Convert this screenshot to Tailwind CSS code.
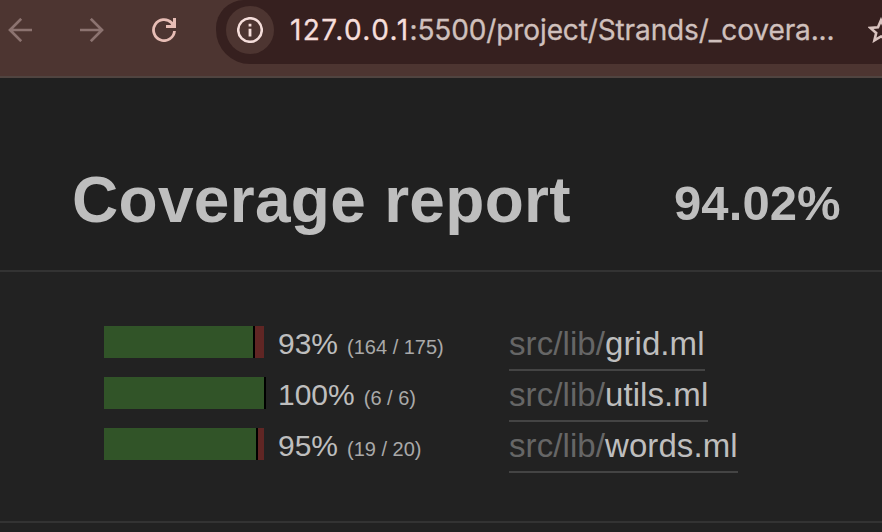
<!DOCTYPE html>
<html lang="en">
<head>
<meta charset="utf-8">
<title>Coverage report</title>
<script src="https://cdn.jsdelivr.net/npm/@tailwindcss/browser@4"></script>
</head>
<body class="w-[882px] h-[532px] overflow-hidden bg-[#222222] font-['Liberation_Sans',Arial,sans-serif] text-[#bebebe]">
<header class="h-[78px] flex items-start bg-[#4d3531] border-b-2 border-[#504440] overflow-hidden">
  <div class="flex w-[216px] h-[60px] shrink-0 items-center pl-2">
    <svg class="w-6 h-6 shrink-0" viewBox="0 0 24 24" fill="none" stroke="#8c7370" stroke-width="2.7"><path d="M24 12H2M13.2 .8L2 12l11.2 11.2"/></svg>
    <svg class="w-6 h-6 ml-12 shrink-0" viewBox="0 0 24 24" fill="none" stroke="#8c7370" stroke-width="2.7"><path d="M0 12h22M10.8 .8L22 12 10.8 23.2"/></svg>
    <svg class="w-6 h-6 ml-12 shrink-0" viewBox="0 0 24 24" fill="none" stroke="#e7bdb5" stroke-width="2.8"><path d="M22.5 13A10.5 10.5 0 1 1 19.6 4.8L21.5 7"/><path d="M21 0h3v10H14V7h4.5L21 4z" fill="#e7bdb5" stroke="none"/></svg>
  </div>
  <div class="w-[720px] h-16 shrink-0 flex items-start rounded-bl-[34px] rounded-tl-[28px] bg-[#36201f] font-[Inter,sans-serif]">
    <div class="w-12 h-12 mt-[6px] ml-[10px] shrink-0 rounded-full bg-[#4d3531] flex items-center justify-center">
      <svg class="w-[26px] h-[26px]" viewBox="0 0 26 26" fill="none" stroke="#f5dedb"><circle cx="13" cy="13" r="11.8" stroke-width="2.5"/><path d="M13 11.7v7.8M13 6.7v2.7" stroke-width="2.8"/></svg>
    </div>
    <div class="w-[578px] h-[60px] ml-4 shrink-0 flex items-center text-[28px] whitespace-nowrap text-[#d0c0bd] [-webkit-text-stroke:0.3px]"><span class="tracking-[-0.12px]"><span class="text-[#f5dedb] tracking-[1.45px]">127.0.0.1</span>:5500/project/Strands/_covera...</span></div>
    <svg class="w-[26px] h-[26px] mt-[17px] shrink-0" viewBox="0 0 26 26" fill="none" stroke="#d9c3bf" stroke-width="2.6"><path d="M13 3.2l3 7 7.6.7-5.8 5 1.8 7.5-6.6-4-6.6 4 1.8-7.5-5.8-5 7.6-.7z"/></svg>
  </div>
</header>
<main>
  <section class="h-[194px] bg-[#202020] border-b-2 border-[#333333] flex items-end pl-[72px] font-bold whitespace-nowrap">
    <h1 class="w-[602px] text-[64px] leading-[72px] pb-[34px] tracking-[0.3px]">Coverage report</h1>
    <div class="text-[49px] leading-[56px] pb-[39px] tracking-[0.1px]">94.02%</div>
  </section>
  <section class="h-[251px] pt-[54px] pl-[104px] border-b-2 border-[#333333] bg-[#222222] flex flex-col gap-[5px] whitespace-nowrap">
    <div class="flex h-[46px] items-start">
      <div class="flex w-[174px] h-8"><i class="w-[149px] bg-[#315428]"></i><i class="w-[2px] bg-black"></i><i class="w-[9px] bg-[#602624]"></i></div>
      <div class="w-[231px] h-9 text-[30px] leading-9"><span>93%</span><span class="ml-[9px] text-[20px] text-[#a9a9a9]">(164 / 175)</span></div>
      <a class="h-[45px] border-b-2 border-[#444444] text-[33px] leading-[36px] tracking-[0.08px]"><span class="text-[#666666]">src/lib/</span>grid.ml</a>
    </div>
    <div class="flex h-[46px] items-start">
      <div class="flex w-[174px] h-8"><i class="w-[160px] bg-[#315428]"></i><i class="w-[2px] bg-black"></i></div>
      <div class="w-[231px] h-9 text-[30px] leading-9"><span>100%</span><span class="ml-[9px] text-[20px] text-[#a9a9a9]">(6 / 6)</span></div>
      <a class="h-[45px] border-b-2 border-[#444444] text-[33px] leading-[36px] tracking-[0.08px]"><span class="text-[#666666]">src/lib/</span>utils.ml</a>
    </div>
    <div class="flex h-[46px] items-start">
      <div class="flex w-[174px] h-8"><i class="w-[152px] bg-[#315428]"></i><i class="w-[2px] bg-black"></i><i class="w-[6px] bg-[#602624]"></i></div>
      <div class="w-[231px] h-9 text-[30px] leading-9"><span>95%</span><span class="ml-[9px] text-[20px] text-[#a9a9a9]">(19 / 20)</span></div>
      <a class="h-[45px] border-b-2 border-[#444444] text-[33px] leading-[36px] tracking-[0.08px]"><span class="text-[#666666]">src/lib/</span>words.ml</a>
    </div>
  </section>
</main>
</body>
</html>
